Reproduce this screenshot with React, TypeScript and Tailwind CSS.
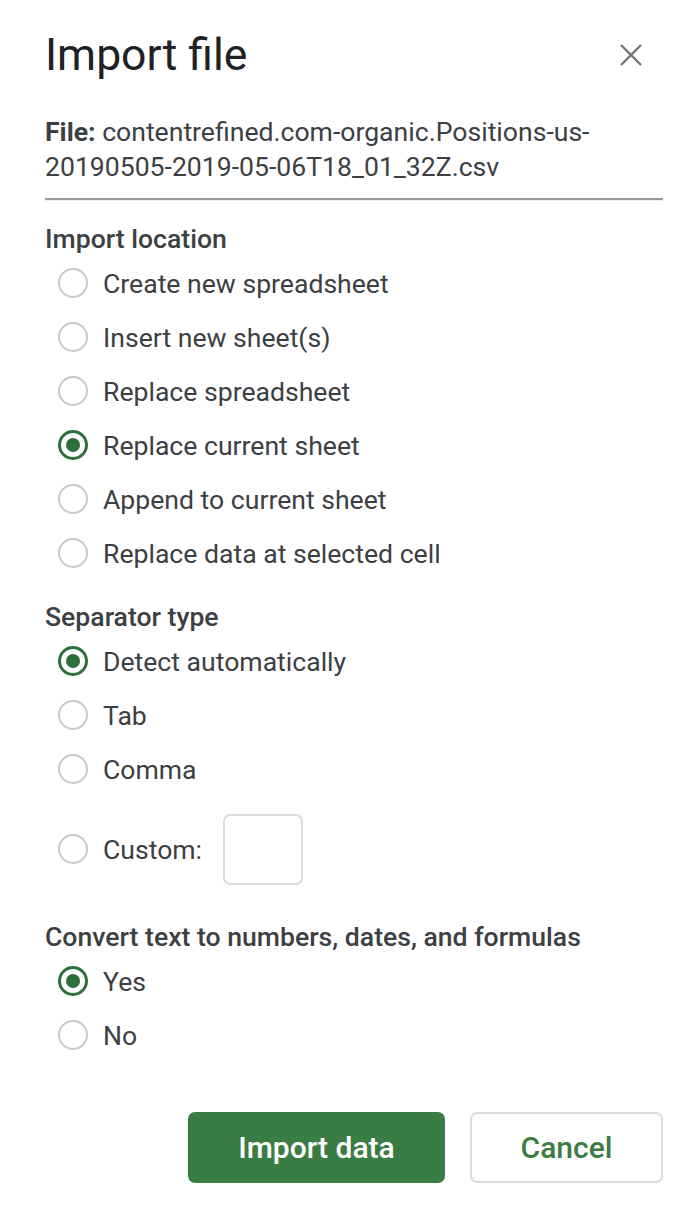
import React from "react";

const GREEN = "#3a7d44";

function Radio({ label, checked }: { label: string; checked?: boolean }) {
  return (
    <div className="flex items-center h-[54px] pl-[13px]">
      {checked ? (
        <span className="w-[30px] h-[30px] rounded-full border-[3px] border-[#2f6f3a] flex items-center justify-center shrink-0">
          <span className="w-[14px] h-[14px] rounded-full bg-[#2f6f3a]" />
        </span>
      ) : (
        <span className="w-[30px] h-[30px] rounded-full border-2 border-[#c8c8c8] shrink-0" />
      )}
      <span className="ml-[15px] text-[26.6px] text-[#3c4043] leading-[35px]">{label}</span>
    </div>
  );
}

function Header({ children }: { children: React.ReactNode }) {
  return (
    <div className="h-[34px] flex items-center text-[26.6px] font-medium text-[#3c4043]">{children}</div>
  );
}

export default function App() {
  return (
    <div
      className="w-[700px] h-[1210px] bg-white pl-[45px] pr-[37px] pt-[27px]"
      style={{ fontFamily: "Roboto, 'Liberation Sans', sans-serif" }}
    >
      <div className="flex items-center justify-between h-[56px]">
        <h1 className="text-[44.5px] leading-[56px] text-[#202124] font-normal">Import file</h1>
        <svg width="22" height="22" viewBox="0 0 22 22" className="mr-[21px]">
          <line x1="1" y1="1" x2="21" y2="21" stroke="#757575" strokeWidth="2.4" />
          <line x1="21" y1="1" x2="1" y2="21" stroke="#757575" strokeWidth="2.4" />
        </svg>
      </div>
      <div className="mt-[31px] pb-[14px] border-b-2 border-[#9a9a9a] text-[26.6px] leading-[35px] text-[#3c4043]">
        <span className="font-bold">File:</span> contentrefined.com-organic.Positions-us-
        <br />
        20190505-2019-05-06T18_01_32Z.csv
      </div>
      <div className="h-px bg-[#ececec]" />
      <div className="mt-[21px]">
        <Header>Import location</Header>
        <Radio label="Create new spreadsheet" />
        <Radio label="Insert new sheet(s)" />
        <Radio label="Replace spreadsheet" />
        <Radio label="Replace current sheet" checked />
        <Radio label="Append to current sheet" />
        <Radio label="Replace data at selected cell" />
      </div>
      <div className="mt-[20px]">
        <Header>Separator type</Header>
        <Radio label="Detect automatically" checked />
        <Radio label="Tab" />
        <Radio label="Comma" />
        <div className="flex items-center h-[106px] pl-[13px]">
          <span className="w-[30px] h-[30px] rounded-full border-2 border-[#c8c8c8] shrink-0" />
          <span className="ml-[15px] text-[26.6px] text-[#3c4043] leading-[35px]">Custom:</span>
          <div className="ml-[21px] w-[80px] h-[71px] rounded-[7px] border-2 border-[#dcdce0]" />
        </div>
      </div>
      <div className="mt-[18px]">
        <Header>Convert text to numbers, dates, and formulas</Header>
        <Radio label="Yes" checked />
        <Radio label="No" />
      </div>
      <div className="mt-[50px] flex justify-end gap-[25px]">
        <button
          className="w-[257px] h-[71px] rounded-[7px] text-white text-[30px] font-medium"
          style={{ backgroundColor: GREEN }}
        >
          Import data
        </button>
        <button className="w-[193px] h-[71px] rounded-[7px] border-2 border-[#dcdce0] bg-white text-[30px] font-medium text-[#3a7d44]">
          Cancel
        </button>
      </div>
    </div>
  );
}
